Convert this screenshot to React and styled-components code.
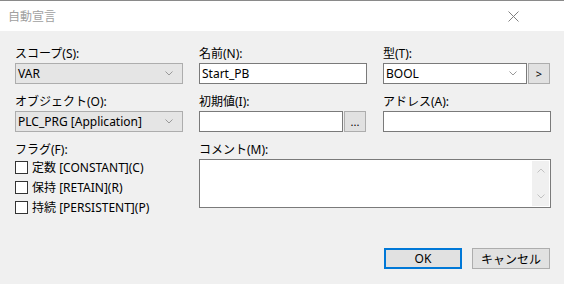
import React from "react";
import styled, { createGlobalStyle } from "styled-components";

const GlobalStyle = createGlobalStyle`
    html, body {
        margin: 0;
        padding: 0;
    }
    body {
        font-family: "Noto Sans", "Noto Sans CJK JP", sans-serif;
        font-size: 12px;
        color: #000;
    }
`;

const Chevron = ({ up }) => (
    <svg width="8" height="5" viewBox="0 0 8 5">
        <path
            d={up ? "M0.5 4.5 L4 1 L7.5 4.5" : "M0.5 0.5 L4 4 L7.5 0.5"}
            fill="none"
            stroke="currentColor"
            strokeWidth="1"
        />
    </svg>
);

const App = () => {
    const flags = [
        ["定数", "[CONSTANT](C)"],
        ["保持", "[RETAIN](R)"],
        ["持続", "[PERSISTENT](P)"],
    ];

    return (
        <>
            <GlobalStyle />
            <Window>
                <TitleBar>
                    <Title>自動宣言</Title>
                    <CloseIcon width="11" height="11" viewBox="0 0 11 11">
                        <path d="M0.5 0.5 L10.5 10.5 M10.5 0.5 L0.5 10.5" stroke="currentColor" strokeWidth="1" />
                    </CloseIcon>
                </TitleBar>

                <Form>
                    <Field>
                        <Label>スコープ(S):</Label>
                        <Combo>
                            <span>VAR</span>
                            <Chevron />
                        </Combo>
                    </Field>
                    <Field>
                        <Label>名前(N):</Label>
                        <Input>Start_PB</Input>
                    </Field>
                    <Field>
                        <Label>型(T):</Label>
                        <WithButton>
                            <Combo editable>
                                <span>BOOL</span>
                                <Chevron />
                            </Combo>
                            <SmallButton>&gt;</SmallButton>
                        </WithButton>
                    </Field>

                    <Field>
                        <Label>オブジェクト(O):</Label>
                        <Combo>
                            <span>PLC_PRG [Application]</span>
                            <Chevron />
                        </Combo>
                    </Field>
                    <Field>
                        <Label>初期値(I):</Label>
                        <WithButton>
                            <Input />
                            <SmallButton>...</SmallButton>
                        </WithButton>
                    </Field>
                    <Field>
                        <Label>アドレス(A):</Label>
                        <Input />
                    </Field>

                    <Field>
                        <Label>フラグ(F):</Label>
                        <FlagList>
                            {flags.map(([jp, en]) => (
                                <FlagRow key={en}>
                                    <CheckBox />
                                    <span>
                                        {jp} {en}
                                    </span>
                                </FlagRow>
                            ))}
                        </FlagList>
                    </Field>
                    <Field span={2}>
                        <Label>コメント(M):</Label>
                        <TextArea>
                            <TextContent />
                            <ScrollBar>
                                <Chevron up />
                                <Chevron />
                            </ScrollBar>
                        </TextArea>
                    </Field>
                </Form>

                <Footer>
                    <Button primary>OK</Button>
                    <Button>キャンセル</Button>
                </Footer>
            </Window>
        </>
    );
};

export default App;

const Window = styled.div`
    box-sizing: border-box;
    height: 100vh;
    display: flex;
    flex-direction: column;
    background: #f0f0f0;
    border-top: 1px solid #8a8a8a;
`;

const TitleBar = styled.div`
    height: 30px;
    display: flex;
    align-items: center;
    justify-content: space-between;
    padding: 0 45px 0 8px;
    background: #fff;
`;

const Title = styled.span`
    color: #a0a0a0;
    font-size: 12px;
`;

const CloseIcon = styled.svg`
    color: #808080;
`;

const Form = styled.div`
    display: grid;
    grid-template-columns: repeat(3, 168px);
    column-gap: 16px;
    row-gap: 10px;
    padding: 15px 0 0 15px;
`;

const Field = styled.div`
    display: flex;
    flex-direction: column;
    grid-column: span ${(p) => p.span || 1};
`;

const Label = styled.div`
    height: 16px;
    line-height: 16px;
    margin-bottom: 1px;
    white-space: nowrap;
`;

const Combo = styled.div`
    box-sizing: border-box;
    height: 21px;
    flex: 1;
    display: flex;
    align-items: center;
    justify-content: space-between;
    padding: 0 9px 0 2px;
    background: ${(p) => (p.editable ? "#fff" : "#e5e5e5")};
    border: 1px solid ${(p) => (p.editable ? "#7a7a7a" : "#adadad")};
    color: #000;

    svg {
        color: #999;
    }
`;

const Input = styled.div`
    box-sizing: border-box;
    height: 21px;
    flex: 1;
    display: flex;
    align-items: center;
    padding: 0 2px;
    background: #fff;
    border: 1px solid #7a7a7a;
`;

const WithButton = styled.div`
    display: flex;
    gap: 1px;
    padding-right: 1px;
`;

const SmallButton = styled.div`
    box-sizing: border-box;
    width: 22px;
    height: 21px;
    display: flex;
    align-items: center;
    justify-content: center;
    background: #e1e1e1;
    border: 1px solid #adadad;
    font-size: 11px;
`;

const FlagList = styled.div`
    display: flex;
    flex-direction: column;
    margin-top: -2px;
`;

const FlagRow = styled.div`
    height: 20px;
    display: flex;
    align-items: center;
    gap: 4px;
    white-space: nowrap;
`;

const CheckBox = styled.div`
    box-sizing: border-box;
    width: 13px;
    height: 13px;
    background: #fff;
    border: 1px solid #333;
`;

const TextArea = styled.div`
    box-sizing: border-box;
    height: 49px;
    display: flex;
    padding: 1px;
    background: #fff;
    border: 1px solid #7a7a7a;
`;

const TextContent = styled.div`
    flex: 1;
`;

const ScrollBar = styled.div`
    width: 17px;
    display: flex;
    flex-direction: column;
    align-items: center;
    justify-content: space-between;
    padding: 7px 0;
    background: #f0f0f0;
    color: #c2c2c2;
`;

const Footer = styled.div`
    margin-top: auto;
    display: flex;
    justify-content: flex-end;
    gap: 10px;
    padding: 0 14px 15px 0;
`;

const Button = styled.div`
    box-sizing: border-box;
    width: 78px;
    height: 21px;
    display: flex;
    align-items: center;
    justify-content: center;
    background: #e1e1e1;
    border: ${(p) => (p.primary ? "2px solid #0078d7" : "1px solid #adadad")};
`;
